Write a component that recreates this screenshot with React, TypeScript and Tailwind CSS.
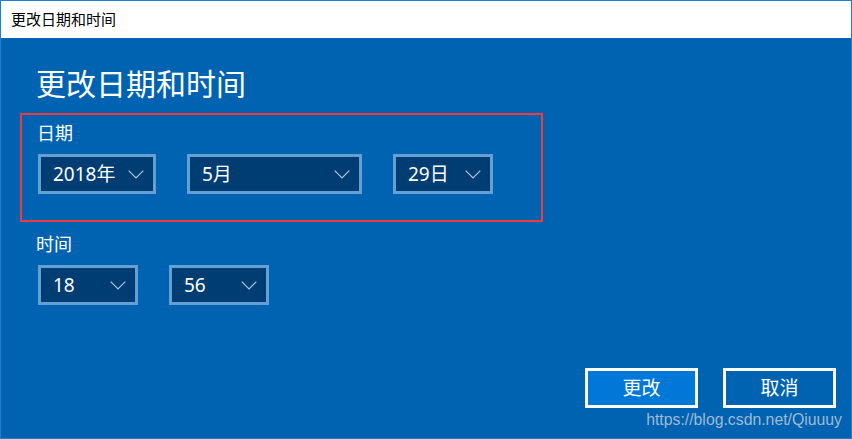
import React from "react";

const FONT = { fontFamily: '"Noto Sans", "Noto Sans CJK SC", sans-serif' };

function Chevron() {
  return (
    <svg width="16" height="9" viewBox="0 0 16 9" className="shrink-0">
      <path d="M0.7 0.7 L8 8 L15.3 0.7" fill="none" stroke="#a9c8e6" strokeWidth="1.2" />
    </svg>
  );
}

function Select({ value, w }: { value: string; w: string }) {
  return (
    <div
      className={`${w} h-[40px] border-[3px] border-[#64a0d4] bg-[#003d72] flex items-center justify-between pl-[12px] pr-[9px] text-white text-[19px] leading-none`}
    >
      <span>{value}</span>
      <Chevron />
    </div>
  );
}

export default function App() {
  return (
    <div
      className="relative w-[852px] h-[439px] border border-[#1a80d0] flex flex-col overflow-hidden"
      style={FONT}
    >
      <div className="h-[37px] bg-white flex items-center pl-[10px] text-[15px] text-black shrink-0">
        更改日期和时间
      </div>
      <div className="flex-1 bg-[#0063b1] flex flex-col text-white">
        <div className="mt-[26px] pl-[35px] text-[30px] leading-[40px]">更改日期和时间</div>
        <div className="ml-[19px] mt-[9px] w-[523px] h-[109px] border-2 border-[#f03a3c] pt-[6px] pl-[15px]">
          <div className="text-[18px] leading-[24px]">日期</div>
          <div className="mt-[9px] ml-[1px] flex gap-[31px]">
            <Select value="2018年" w="w-[118px]" />
            <Select value="5月" w="w-[175px]" />
            <Select value="29日" w="w-[100px]" />
          </div>
        </div>
        <div className="mt-[10px] pl-[35px] text-[18px] leading-[24px]">时间</div>
        <div className="mt-[9px] ml-[37px] flex gap-[31px]">
          <Select value="18" w="w-[100px]" />
          <Select value="56" w="w-[100px]" />
        </div>
        <div className="mt-auto mb-[30px] mr-[15px] flex justify-end gap-[25px]">
          <div className="w-[113px] h-[40px] border-[3px] border-white bg-[#0078d7] flex items-center justify-center text-[19px]">
            更改
          </div>
          <div className="w-[113px] h-[40px] border-[3px] border-white flex items-center justify-center text-[19px]">
            取消
          </div>
        </div>
      </div>
      <div
        className="absolute right-[9px] bottom-[10px] text-[15.8px] leading-none text-[#9fbad6]"
        style={{ fontFamily: '"Liberation Sans", Arial, sans-serif' }}
      >
        https://blog.csdn.net/Qiuuuy
      </div>
    </div>
  );
}
